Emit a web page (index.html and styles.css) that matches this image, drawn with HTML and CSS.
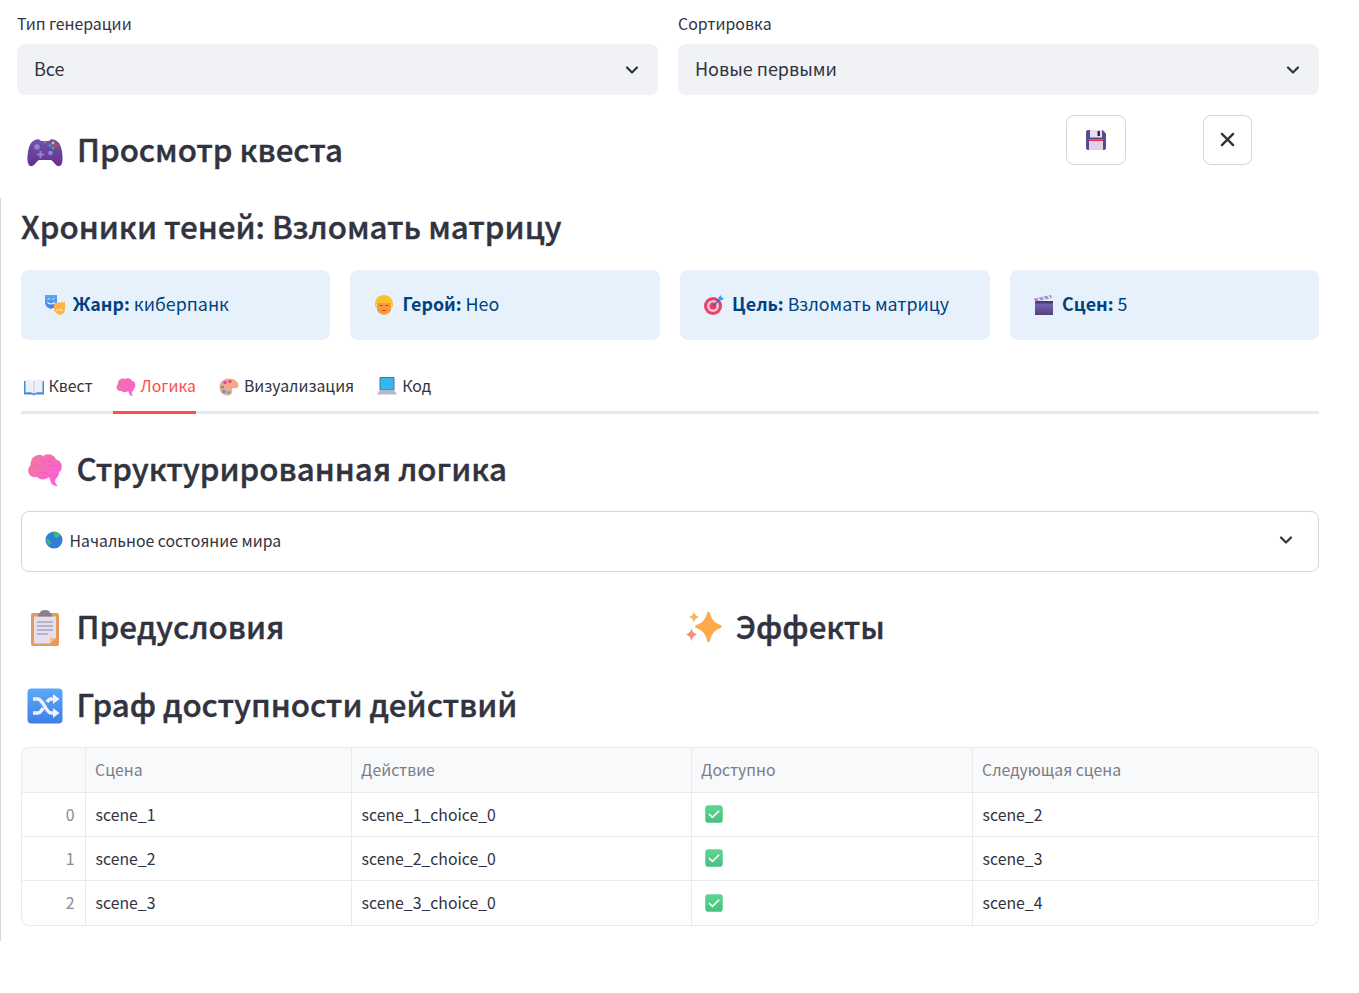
FILE: index.html
```html
<!DOCTYPE html>
<html lang="ru">
<head>
<meta charset="utf-8">
<title>Просмотр квеста</title>
<link rel="stylesheet" href="styles.css">
</head>
<body>
<svg class="defs" aria-hidden="true">
  <defs>
    <linearGradient id="gPad" x1="0" y1="0" x2="0" y2="1"><stop offset="0" stop-color="#6f55a8"/><stop offset="1" stop-color="#652f8f"/></linearGradient>
    <linearGradient id="gBrain" gradientUnits="userSpaceOnUse" x1="4" y1="4" x2="28" y2="28"><stop offset="0" stop-color="#f0789f"/><stop offset="1" stop-color="#ff5cdc"/></linearGradient>
    <linearGradient id="gBlue" x1="0" y1="0" x2="0" y2="1"><stop offset="0" stop-color="#5aa9f8"/><stop offset="1" stop-color="#3f7fe8"/></linearGradient>
    <linearGradient id="gClap" x1="0" y1="0" x2="0" y2="1"><stop offset="0" stop-color="#7c66b8"/><stop offset="1" stop-color="#54407f"/></linearGradient>
    <linearGradient id="gGreen" x1="0" y1="0" x2="0" y2="1"><stop offset="0" stop-color="#5cd68f"/><stop offset="1" stop-color="#48c07e"/></linearGradient>
    <symbol id="brain" viewBox="0 0 32 32">
      <g fill="url(#gBrain)">
        <circle cx="11" cy="10.500" r="8"/>
        <circle cx="19" cy="9.500" r="7.500"/>
        <circle cx="24.500" cy="13" r="6.500"/>
        <circle cx="7" cy="16.500" r="6"/>
        <circle cx="14" cy="18" r="6.500"/>
        <circle cx="23" cy="18.500" r="5.500"/>
        <path d="M20 22h6l-1 4c0 1.500 1 3 2.500 4-3 .5-5.500-.5-6.500-3.500z"/>
      </g>
      <path fill="none" stroke="#e4589f" stroke-opacity=".5" stroke-width=".9" stroke-linecap="round" d="M6 13c2-2 5-2 7.500 0M12 6c2 1 3 3 2.500 5M19 13c2-1.500 5-1.500 7 0M18 7.500c1 1 3 1.500 5 1M10 19.500c2-1.500 5-1.500 8 0"/>
    </symbol>
    <symbol id="check" viewBox="0 0 32 32">
      <rect x="2" y="2" width="28" height="28" rx="5" fill="url(#gGreen)"/>
      <path d="M8.500 16.500l5 5 10-10" fill="none" stroke="#f2fbf5" stroke-width="2.600" stroke-linecap="round" stroke-linejoin="round"/>
    </symbol>
  </defs>
</svg>

<div class="filters">
  <div class="field">
    <div class="field-label">Тип генерации</div>
    <div class="select"><span>Все</span><svg class="chev" viewBox="0 0 16 16"><path d="M3 5.500l5 5 5-5"/></svg></div>
  </div>
  <div class="field">
    <div class="field-label">Сортировка</div>
    <div class="select"><span>Новые первыми</span><svg class="chev" viewBox="0 0 16 16"><path d="M3 5.500l5 5 5-5"/></svg></div>
  </div>
</div>

<div class="view-head">
  <h2 class="title">
    <svg class="emoji" viewBox="0 0 36 36">
      <path fill="url(#gPad)" d="M8 5C10 3.500 13 4 14 6H22C23 4 26 3.500 28 5C31 6 33.500 9 34.500 14C35.500 19 36 25 35 28C34 31.500 31 32 29 30C27 28 26 26 24 25H12C10 26 9 28 7 30C5 32 2 31.500 1 28C0 25 .5 19 1.500 14C2.500 9 5 6 8 5Z"/>
      <circle cx="10" cy="12" r="2.800" fill="#9384cf"/>
      <circle cx="18" cy="7" r="1.300" fill="#8d8a99"/>
      <circle cx="23.500" cy="18" r="2.300" fill="#9384cf"/>
      <path d="M12.500 16h2v2.500h2.500v2h-2.500v2.500h-2v-2.500h-2.500v-2h2.500z" fill="#9384cf"/>
      <circle cx="26" cy="8" r="1.500" fill="#f4b63f"/>
      <circle cx="23" cy="10.500" r="1.500" fill="#3e8ff0"/>
      <circle cx="29" cy="10.500" r="1.500" fill="#e8413c"/>
      <circle cx="26" cy="13" r="1.500" fill="#3fbf60"/>
    </svg>
    <span>Просмотр квеста</span>
  </h2>
  <button class="icon-btn save" type="button" aria-label="Сохранить">
    <svg viewBox="0 0 20 20" width="20" height="20">
      <path fill="#5b4a8c" d="M2 0h14.500L20 3.500V18a2 2 0 0 1-2 2H2a2 2 0 0 1-2-2V2a2 2 0 0 1 2-2z"/>
      <rect x="4" y="0" width="12" height="7.500" fill="#e6dff0"/>
      <rect x="11.500" y="1" width="2.500" height="5" fill="#2f2752"/>
      <rect x="3" y="9.500" width="14" height="10.500" fill="#dcd2ea"/>
      <rect x="3" y="9.500" width="14" height="1.500" fill="#ef2f50"/>
    </svg>
  </button>
  <button class="icon-btn close" type="button" aria-label="Закрыть">
    <svg viewBox="0 0 16 16" width="15" height="15"><path d="M2 2l12 12M14 2L2 14" fill="none" stroke="#31333f" stroke-width="2.500" stroke-linecap="round"/></svg>
  </button>
</div>

<main class="panel">
  <h1 class="quest-title">Хроники теней: Взломать матрицу</h1>

  <div class="cards">
    <div class="card">
      <svg class="emoji-s" viewBox="0 0 20 20">
        <path fill="url(#gBlue)" d="M0 0h12v7c0 4-3 6-6 7-3-1-6-3-6-7z"/>
        <path d="M2.500 4h2.500M7 4h2.500" stroke="#cfe5ff" stroke-width="1"/>
        <path d="M2.500 7c1 2.500 6 2.500 7 0" fill="none" stroke="#e4f1ff" stroke-width="1.200"/>
        <path fill="#ffb347" d="M9 8l11-1v7c0 3.500-2.500 5.500-5.200 6-3-1-5.800-3-5.800-6.500z"/>
        <path d="M11.500 16c1-2 4.500-2 5.700-.2" fill="none" stroke="#fff1dc" stroke-width="1.200"/>
      </svg>
      <p><b>Жанр:</b> киберпанк</p>
    </div>
    <div class="card">
      <svg class="emoji-s" viewBox="0 0 20 20">
        <ellipse cx="10" cy="11.500" rx="7.500" ry="8.500" fill="#f99a3c"/>
        <path fill="#fbc02d" d="M1.500 13C-.5 5 4 0 10 0S20.500 5 18.500 13c-.4-2.500-1.200-4.500-2.500-5.500-2.500 1-9.500 1-12 0-1.300 1-2.100 3-2.500 5.500z"/>
        <path d="M5.800 10.500h2.800M11.400 10.500h2.800" stroke="#8a5a2b" stroke-width="1"/>
        <path d="M8.500 15.500h3" stroke="#c2453a" stroke-width="1.200" stroke-linecap="round"/>
      </svg>
      <p><b>Герой:</b> Нео</p>
    </div>
    <div class="card">
      <svg class="emoji-s" viewBox="0 0 20 20">
        <circle cx="9" cy="11" r="9" fill="#e8416c"/>
        <circle cx="9" cy="11" r="6" fill="#f2c6d2"/>
        <circle cx="9" cy="11" r="3.500" fill="#e8416c"/>
        <path d="M9 11L17 3" stroke="#3a5fb0" stroke-width="1.300"/>
        <path d="M14.500 2.500L17 0l.5 2.500L20 3l-2.500 2.500-3-.3z" fill="#3f9cf0"/>
      </svg>
      <p><b>Цель:</b> Взломать матрицу</p>
    </div>
    <div class="card">
      <svg class="emoji-s" viewBox="0 0 20 20">
        <rect x="1" y="8" width="18" height="12" fill="url(#gClap)"/>
        <rect x="1" y="6" width="18" height="2.500" fill="#4a3b6b"/>
        <path d="M0 3.500L17 0l1 3L1 6.500z" fill="#a78fd8"/>
        <path d="M4 2.900l2 2.700M9 1.900l2 2.700M14 .8l2 2.700" stroke="#efe8fa" stroke-width="1.500"/>
      </svg>
      <p><b>Сцен:</b> 5</p>
    </div>
  </div>

  <nav class="tabs">
    <div class="tab">
      <svg class="emoji-t" viewBox="0 0 20 20">
        <path fill="#3f8fd8" d="M0 4h20v13.500H11.500l-1.500 1-1.500-1H0z"/>
        <path fill="#eef0f8" d="M1.500 3c3-.8 6-.5 8.500 1 2.500-1.500 5.500-1.800 8.500-1v12.500c-3-.7-6-.4-8.500 1-2.500-1.400-5.500-1.700-8.500-1z"/>
        <path d="M10 4v12.500" stroke="#b9bdd0" stroke-width=".8"/>
      </svg>
      <span>Квест</span>
    </div>
    <div class="tab active">
      <svg class="emoji-t"><use href="#brain"/></svg>
      <span>Логика</span>
    </div>
    <div class="tab">
      <svg class="emoji-t" viewBox="0 0 20 20">
        <path fill="#f7a58c" d="M9 1.500c5.500-.5 10.500 3 10.500 7 0 2.500-2.500 3-4.500 2.500-1.800-.4-2.500 1-2 2.500.8 2.500-1 5-4.500 5C3.500 18.500.5 14.500.5 10 .5 5.500 4 2 9 1.500z"/>
        <circle cx="6" cy="5.500" r="1.800" fill="#c64fc8"/>
        <circle cx="11" cy="4.500" r="1.600" fill="#e8416c"/>
        <circle cx="3.500" cy="10" r="1.600" fill="#45b46a"/>
        <circle cx="5" cy="14.500" r="1.700" fill="#3f9cf0"/>
        <circle cx="9.500" cy="15.500" r="1.400" fill="#30c0b8"/>
      </svg>
      <span>Визуализация</span>
    </div>
    <div class="tab">
      <svg class="emoji-t" viewBox="0 0 20 20">
        <rect x="2.500" y="0" width="15" height="13.500" rx="1" fill="#5d6b80"/>
        <rect x="3.500" y="1" width="13" height="11.500" fill="#35b8f0"/>
        <path d="M2.500 13.500h15L20 17.500H0z" fill="#b6bac8"/>
      </svg>
      <span>Код</span>
    </div>
  </nav>

  <h2 class="title logic">
    <svg class="emoji"><use href="#brain"/></svg>
    <span>Структурированная логика</span>
  </h2>

  <div class="expander">
    <div class="expander-label">
      <svg class="emoji-x" viewBox="0 0 20 20">
        <circle cx="10" cy="10" r="9.500" fill="#2f7fd8"/>
        <path fill="#3fb87a" d="M9 1c3-.5 6 .5 8 3-.5 2-2.500 2.500-3.500 4-1.500 0-3.500-1-3.500-3 0-1.500-1-2-1-4zM1.500 8.500c2 0 4 1.500 5 3.500.5 1.500-.5 3-1.500 4-2-1.500-3.500-4.500-3.500-7.500z"/>
      </svg>
      <span>Начальное состояние мира</span>
    </div>
    <svg class="chev" viewBox="0 0 16 16"><path d="M3 5.500l5 5 5-5"/></svg>
  </div>

  <div class="columns">
    <h2 class="title">
      <svg class="emoji" viewBox="0 0 36 36">
        <rect x="4" y="3" width="28" height="33" rx="2" fill="#e39a5e"/>
        <path d="M7 6.500h22V28l-6 5.500H7z" fill="#e4deef"/>
        <path d="M23 33.500V28h6z" fill="#f4b98a"/>
        <path d="M13 3c0-2 2-3 5-3s5 1 5 3c1.500 0 2 1 2 3.500H11C11 4 11.500 3 13 3z" fill="#85808f"/>
        <path d="M10 12h16M10 16h16M10 20h16M10 24h11" stroke="#8d899c" stroke-width="1.200"/>
      </svg>
      <span>Предусловия</span>
    </h2>
    <h2 class="title">
      <svg class="emoji" viewBox="0 0 36 36">
        <path fill="#ffa948" stroke="#ffa948" stroke-width="2.500" stroke-linejoin="round" d="M22.500 3C24 10 27 14 34.500 16.500C27 19 24 23.500 22.500 31C21 23.500 18 19 10.500 16.500C18 14 21 10 22.500 3Z"/>
        <path fill="#f8b26a" d="M8 1c.6 3.500 1.800 4.800 5 6-3.200 1.200-4.400 2.500-5 6-.6-3.500-1.800-4.800-5-6 3.200-1.200 4.400-2.500 5-6z"/>
        <path fill="#fb8d78" d="M5.500 18c.6 3.600 2 5 5.500 6.500-3.500 1.500-4.900 3-5.500 7-.6-4-2-5.500-5.500-7 3.500-1.500 4.900-2.900 5.500-6.500z"/>
      </svg>
      <span>Эффекты</span>
    </h2>
  </div>

  <h2 class="title graph">
    <svg class="emoji" viewBox="0 0 36 36">
      <rect x=".5" y=".5" width="35" height="35" rx="4" fill="url(#gBlue)"/>
      <path d="M6 11h5c5 0 8 14 13 14h3M6 25h5c2 0 3.500-2 5-5M20 14c1.200-1.800 2.500-3 4-3h3" fill="none" stroke="#f0f2ff" stroke-width="3.500"/>
      <path d="M26 6l6.500 5-6.500 5zM26 20l6.500 5-6.500 5z" fill="#f0f2ff"/>
    </svg>
    <span>Граф доступности действий</span>
  </h2>

  <div class="table-wrap">
    <table class="grid">
      <colgroup><col class="c0"><col class="c1"><col class="c2"><col class="c3"><col class="c4"></colgroup>
      <thead>
        <tr><th></th><th>Сцена</th><th>Действие</th><th>Доступно</th><th>Следующая сцена</th></tr>
      </thead>
      <tbody>
        <tr><td class="idx">0</td><td>scene_1</td><td>scene_1_choice_0</td><td><svg class="tick"><use href="#check"/></svg></td><td>scene_2</td></tr>
        <tr><td class="idx">1</td><td>scene_2</td><td>scene_2_choice_0</td><td><svg class="tick"><use href="#check"/></svg></td><td>scene_3</td></tr>
        <tr><td class="idx">2</td><td>scene_3</td><td>scene_3_choice_0</td><td><svg class="tick"><use href="#check"/></svg></td><td>scene_4</td></tr>
      </tbody>
    </table>
  </div>
</main>
</body>
</html>
```
FILE: styles.css
```css
* { box-sizing: border-box; }
html, body { margin: 0; padding: 0; background: #fff; }
body {
  font-family: "Noto Sans CJK SC", "Noto Sans", sans-serif;
  color: #31333f;
  font-size: 16px;
  height: 993px;
  overflow: hidden;
}
.defs { width: 0; height: 0; position: absolute; }

.filters { display: flex; gap: 20px; padding: 14px 40px 0 17px; }
.field { flex: 1; min-width: 0; }
.field-label { font-size: 15.9px; line-height: 20px; height: 30px; }
.select {
  height: 51px; background: #f0f2f6; border-radius: 8px;
  display: flex; align-items: center; justify-content: space-between;
  padding: 0 18px 0 17px;
  font-size: 18px;
}
.select span { padding-bottom: 4px; }
.chev { width: 16px; height: 16px; fill: none; stroke: #31333f; stroke-width: 2.200; stroke-linecap: round; stroke-linejoin: round; flex: none; }

.title {
  margin: 0; display: flex; align-items: center; gap: 14px;
  height: 40px;
  font-size: 31.3px; line-height: 40px; font-weight: 500; color: #31333f;
  -webkit-text-stroke: 0.4px #31333f;
  padding-left: 6px;
}
.title span { padding-bottom: 4px; }
.emoji { width: 36px; height: 36px; flex: none; }
.emoji-s { width: 20px; height: 20px; flex: none; }
.emoji-t { width: 20px; height: 20px; flex: none; }
.emoji-x { width: 18px; height: 18px; flex: none; }

.view-head { display: flex; align-items: flex-start; padding: 20px 0 0 21px; height: 103px; }
.view-head .title { width: 1045px; margin-top: 18px; flex: none; }
.view-head .title span { padding-bottom: 8px; }
.icon-btn {
  height: 50px; background: #fff; border: 1px solid #d6d6d9; border-radius: 8px;
  display: flex; align-items: center; justify-content: center; padding: 0;
}
.save { width: 60px; margin-right: 77px; }
.close { width: 49px; padding-bottom: 2px; }

.panel { border-left: 1px solid #d6d6d8; margin-right: 40px; padding-left: 19.6px; height: 743px; }
.quest-title {
  margin: 0; font-size: 31.3px; line-height: 40px; font-weight: 500;
  -webkit-text-stroke: 0.4px #31333f;
  padding: 8px 0 0 .5px; height: 72px;
}

.cards { display: grid; grid-template-columns: 309.4fr 309.6fr 310fr 309.4fr; gap: 20px; }
.card {
  height: 70px; background: #e6f1fc; border-radius: 8px;
  display: flex; align-items: center; gap: 8px; padding: 0 24.5px;
  color: #004280; font-size: 17.85px;
}
.card p { margin: 0 0 4px; }
.card b { font-weight: 600; }

.tabs { display: flex; gap: 20px; height: 74px; border-bottom: 3px solid #e9e9eb; padding-top: 26px; }
.tab {
  display: flex; align-items: center; gap: 5px; font-size: 15.8px;
  height: 48px; padding: 0 0 6px 3px; color: #31333f;
}
.tab.active { color: #ff4b4b; border-bottom: 3px solid #ff4b4b; padding-bottom: 3px; }
.tab span { padding-bottom: 3px; }

.title.logic { margin-top: 36px; }
.expander {
  margin-top: 21px; height: 61px; border: 1px solid #d6d6d9; border-radius: 8px;
  display: flex; align-items: center; justify-content: space-between; padding: 0 24px 4px 23px;
}
.expander-label { display: flex; align-items: center; gap: 7px; font-size: 15.8px; }
.expander-label span { padding-top: 2px; }

.columns { display: grid; grid-template-columns: 1fr 1fr; gap: 20px; margin-top: 36px; }
.title.graph { margin-top: 38px; }

.table-wrap { margin-top: 21px; border: 1px solid #e9eaec; border-radius: 8px; overflow: hidden; }
.grid { width: 100%; border-collapse: collapse; table-layout: fixed; font-size: 15.8px; }
.c0 { width: 63.5px; }
.c1 { width: 266px; }
.c2 { width: 340px; }
.c3 { width: 281px; }
.grid th {
  height: 44px; background: #f8f9fb; color: #7b7d87; font-weight: 400; text-align: left;
  padding: 0 9.5px; border-right: 1px solid #e9eaec; border-bottom: 1px solid #e9eaec;
}
.grid td {
  height: 44px; padding: 0 10px; color: #31333f;
  border-right: 1px solid #e9eaec; border-bottom: 1px solid #e9eaec;
}
.grid th:last-child, .grid td:last-child { border-right: 0; }
.grid tr:last-child td { border-bottom: 0; height: 45px; }
.grid td.idx { text-align: right; color: #8a8c95; }
.tick { width: 20px; height: 20px; margin-left: 2px; display: block; }
```
